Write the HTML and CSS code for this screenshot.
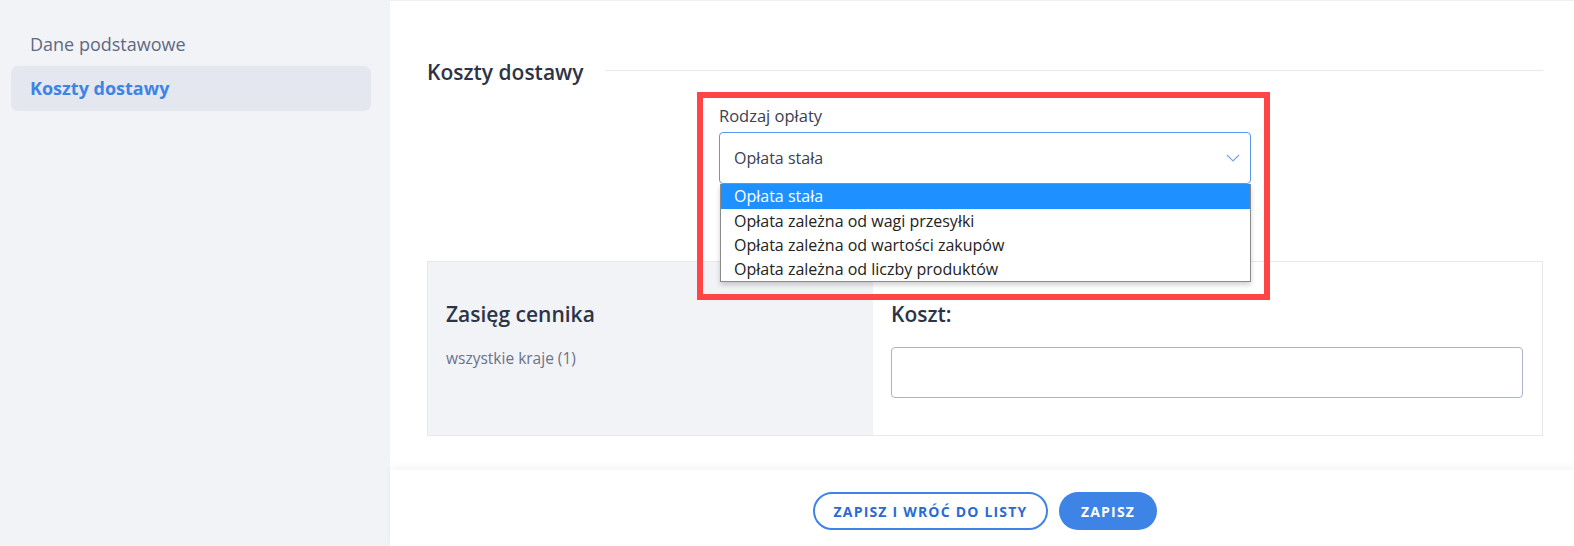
FILE: index.html
```html
<!DOCTYPE html>
<html lang="pl">
<head>
<meta charset="utf-8">
<link rel="stylesheet" href="styles.css">
</head>
<body>
<div class="page">
  <aside class="sidebar">
    <nav class="nav">
      <a class="nav-item">Dane podstawowe</a>
      <a class="nav-item active">Koszty dostawy</a>
    </nav>
  </aside>
  <main class="main">
    <div class="content">
      <div class="section-title">
        <h2>Koszty dostawy</h2>
        <span class="rule"></span>
      </div>
      <div class="field-wrap">
        <div class="highlight">
          <label class="label">Rodzaj opłaty</label>
          <div class="select">
            <span>Opłata stała</span>
            <svg class="chev" width="14" height="8" viewBox="0 0 14 8"><path d="M1 1l6 6 6-6" fill="none" stroke="#7aa7e6" stroke-width="1.2"/></svg>
          </div>
          <ul class="options">
            <li class="opt selected">Opłata stała</li>
            <li class="opt">Opłata zależna od wagi przesyłki</li>
            <li class="opt">Opłata zależna od wartości zakupów</li>
            <li class="opt">Opłata zależna od liczby produktów</li>
          </ul>
        </div>
      </div>
      <div class="card">
        <div class="card-left">
          <h3>Zasięg cennika</h3>
          <p>wszystkie kraje (1)</p>
        </div>
        <div class="card-right">
          <h3>Koszt:</h3>
          <div class="input"></div>
        </div>
      </div>
    </div>
    <footer class="footer">
      <button class="btn outline">ZAPISZ I WRÓĆ DO LISTY</button>
      <button class="btn filled">ZAPISZ</button>
    </footer>
  </main>
</div>
</body>
</html>
```
FILE: styles.css
```css
* { box-sizing: border-box; }
html, body { margin: 0; padding: 0; }
body {
  font-family: "Open Sans", "Lato", sans-serif;
  color: #2d3446;
  background: #fff;
  width: 1574px;
  height: 546px;
  overflow: hidden;
}
.page { display: flex; height: 546px; }
.sidebar {
  width: 390px;
  flex: none;
  background: #f2f3f7;
  padding: 22px 19px 0 11px;
}
.nav { display: flex; flex-direction: column; }
.nav-item {
  display: block;
  height: 44px;
  line-height: 44px;
  padding-left: 19px;
  font-size: 18px;
  color: #5f6982;
  border-radius: 7px;
}
.nav-item.active {
  height: 45px;
  background: #e4e7ef;
  color: #3d84e6;
  font-weight: 700;
}
.main {
  flex: 1;
  display: flex;
  flex-direction: column;
  border-top: 1px solid #eef0f4;
  min-width: 0;
}
.content { flex: 1; padding: 51px 31px 0 37px; }
.section-title { display: flex; align-items: center; gap: 22px; height: 40px; }
.section-title h2 { margin: 0 0 1px; font-size: 21px; font-weight: 600; color: #2d3446; white-space: nowrap; }
.rule { flex: 1; height: 1px; background: #e8e9ed; margin-top: -4px; }
.field-wrap {
  display: flex;
  height: 169px;
  position: relative;
  z-index: 2;
  padding-left: 270px;
}
.highlight {
  width: 573px;
  height: 208px;
  border: 6px solid #ff4545;
  padding: 7px 0 0 16px;
  flex: none;
}
.label { display: block; font-size: 16.5px; color: #3a4152; height: 22px; line-height: 22px; }
.select {
  margin-top: 5px;
  width: 532px;
  height: 52px;
  border: 1px solid #5a9aee;
  border-radius: 4px;
  display: flex;
  align-items: center;
  justify-content: space-between;
  padding: 0 10px 0 14px;
  font-size: 16px;
  color: #3a4152;
  background: #fff;
}
.options {
  list-style: none;
  margin: 0 0 0 1px;
  padding: 0;
  width: 531px;
  background: #fff;
  border: 1px solid #8a8a8a;
  border-top: none;
  box-shadow: 0 3px 5px rgba(0,0,0,0.18);
}
.opt {
  height: 24px;
  line-height: 24px;
  padding-left: 13px;
  font-family: "Open Sans", sans-serif;
  font-size: 16px;
  color: #222;
}
.opt.selected { background: #1e90ff; color: #fff; height: 25px; }
.card {
  display: flex;
  height: 175px;
  border: 1px solid #e8e8ea;
}
.card-left {
  width: 445px;
  background: #f2f3f7;
  padding: 38px 18px;
}
.card h3 { margin: 0; font-size: 21px; font-weight: 600; color: #2d3446; line-height: 28px; }
.card-left p { margin: 19px 0 0; font-size: 15.5px; color: #6b7288; }
.card-right { flex: 1; padding: 38px 19px 0 18px; }
.input {
  margin-top: 19px;
  height: 51px;
  border: 1px solid #a9b3d0;
  border-radius: 4px;
}
.footer {
  height: 76px;
  flex: none;
  background: #fff;
  box-shadow: 0 -4px 8px rgba(0,0,0,0.04);
  display: flex;
  justify-content: center;
  align-items: center;
  gap: 11px;
  padding: 6px 0 0 6px;
}
.btn {
  height: 38px;
  border-radius: 19px;
  font-family: "Open Sans", sans-serif;
  font-weight: 700;
  font-size: 14px;
  letter-spacing: 1.2px;
  padding: 0;
  white-space: nowrap;
  cursor: pointer;
}
.btn.outline { background: #fff; border: 2px solid #3d84e6; color: #2a6ad3; width: 235px; }
.btn.filled { background: #3d84e6; border: none; color: #fff; width: 98px; }
```
